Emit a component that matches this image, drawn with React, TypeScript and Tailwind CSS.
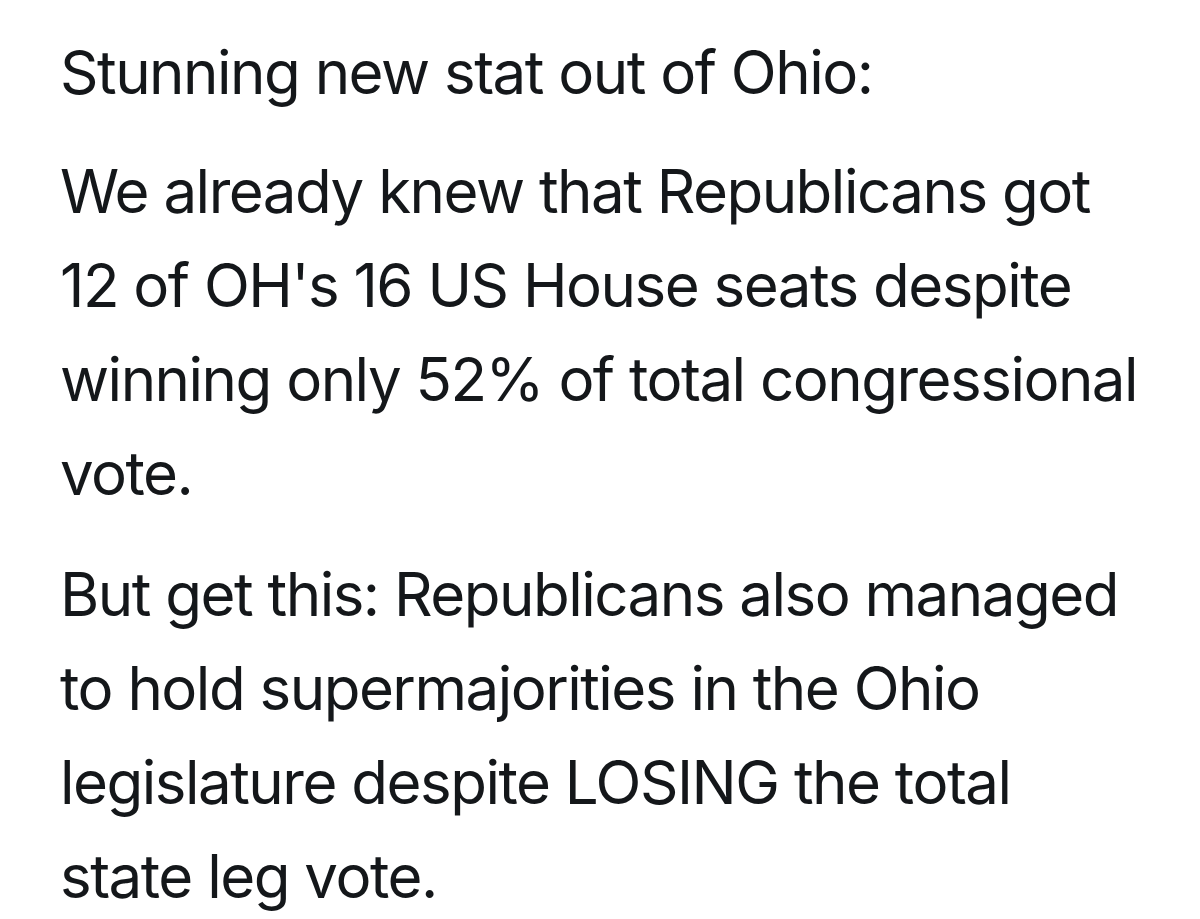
export default function App() {
  return (
    <div className="min-h-screen bg-white pl-[60px] pt-[25px] text-[#14171a] font-['Inter',sans-serif] text-[60px] leading-[94px] tracking-[-0.025em] whitespace-nowrap">
      <p className="mb-[25px]">Stunning new stat out of Ohio:</p>
      <p className="mb-[27px]">
        We already knew that Republicans got
        <br />
        12 of OH's 16 US House seats despite
        <br />
        winning only 52% of total congressional
        <br />
        vote.
      </p>
      <p>
        But get this: Republicans also managed
        <br />
        to hold supermajorities in the Ohio
        <br />
        legislature despite LOSING the total
        <br />
        state leg vote.
      </p>
    </div>
  )
}
